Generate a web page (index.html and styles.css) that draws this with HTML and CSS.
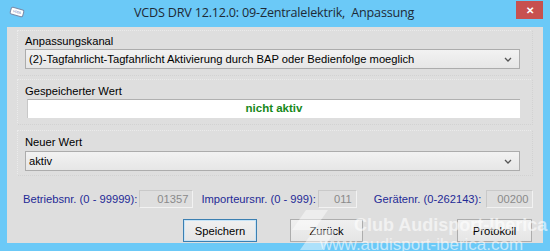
FILE: index.html
```html
<!DOCTYPE html>
<html lang="de">
  <head>
    <meta charset="UTF-8" />
    <title>VCDS DRV 12.12.0: 09-Zentralelektrik, Anpassung</title>
    <link rel="stylesheet" href="styles.css">
  </head>

  <body>
    <div class="window">
      <div class="titlebar">
        <i class="app-icon">VCDS</i>
        <span class="title">VCDS DRV 12.12.0: 09-Zentralelektrik,&nbsp; Anpassung</span>
        <button class="close">&#x2715;</button>
      </div>

      <div class="client">
        <div class="group group-kanal">
          <p class="label">Anpassungskanal</p>
          <div class="combo">
            <span>(2)-Tagfahrlicht-Tagfahrlicht Aktivierung durch BAP oder Bedienfolge moeglich</span>
            <svg class="chevron" width="8" height="5" viewBox="0 0 8 5"><path d="M1 1l3 3 3-3" fill="none" stroke="#555" stroke-width="1.3"/></svg>
          </div>
        </div>

        <div class="group group-stored">
          <p class="label">Gespeicherter Wert</p>
          <div class="value">nicht aktiv</div>
        </div>

        <div class="group group-new">
          <p class="label">Neuer Wert</p>
          <div class="combo">
            <span>aktiv</span>
            <svg class="chevron" width="8" height="5" viewBox="0 0 8 5"><path d="M1 1l3 3 3-3" fill="none" stroke="#555" stroke-width="1.3"/></svg>
          </div>
        </div>

        <div class="numbers">
          <span class="num-label">Betriebsnr. (0 - 99999):</span>
          <span class="num-box box-betrieb">01357</span>
          <span class="num-label">Importeursnr. (0 - 999):</span>
          <span class="num-box box-importeur">011</span>
          <span class="num-label label-geraet">Gerätenr. (0-262143):</span>
          <span class="num-box box-geraet">00200</span>
        </div>

        <div class="buttons">
          <button class="btn btn-save">Speichern</button>
          <button class="btn btn-back">Zurück</button>
          <button class="btn btn-log">Protokoll</button>
        </div>
      </div>

      <!-- Wasserzeichen über dem Fenster -->
      <svg class="wm-logo" width="60" height="42" viewBox="0 0 60 42">
        <path d="M14 2h22l-14 20h22l-14 20H8l14-20H0z" fill="rgba(255,255,255,0.45)"/>
      </svg>
      <div class="watermark">
        <span class="wm-club">Club Audisport-Iberica</span>
        <span class="wm-url">www.audisport-iberica.com</span>
      </div>
    </div>
  </body>
</html>
```

FILE: styles.css
```css
body {
  margin: 0;
  background: #6bc9f7;
  font-family: "Liberation Sans", Arial, sans-serif;
}

.window {
  position: relative;
  width: 550px;
  height: 251px;
  overflow: hidden;
  background: #6bc9f7;
}

.titlebar {
  height: 27px;
  display: flex;
  align-items: center;
  position: relative;
}

.app-icon {
  margin-left: 10px;
  margin-top: -3px;
  width: 12px;
  height: 6px;
  background: #fff;
  border: 1px solid #7a8aa8;
  border-radius: 2px;
  transform: rotate(15deg);
  font-size: 3px;
  font-style: normal;
  line-height: 6px;
  color: #3050a0;
  text-align: center;
  overflow: hidden;
}

.title {
  margin-left: 110px;
  font-family: "Open Sans", "Noto Sans", sans-serif;
  font-size: 12.6px;
  letter-spacing: -0.2px;
  color: #1e2a36;
  margin-top: -2px;
  white-space: nowrap;
}

.close {
  position: absolute;
  right: 7px;
  top: 1px;
  width: 27px;
  height: 18px;
  border: none;
  background: #c7504f;
  color: #fff;
  font-size: 10px;
  font-weight: bold;
  padding: 0;
}

.client {
  margin: 0 7px;
  height: 216px;
  background: #dedede;
  padding: 3px 10px 0 10px;
  box-sizing: border-box;
  font-size: 11.2px;
  color: #000;
}

.group {
  box-sizing: border-box;
  height: 46px;
  border: 1px dotted #ebebeb;
  border-right-color: #d2d2d2;
  border-bottom-color: #d2d2d2;
  padding: 0 12px 0 7px;
}

.group .label {
  margin: 0;
  line-height: 12px;
  white-space: nowrap;
}

.group-kanal {
  padding-top: 4px;
}

.group-kanal .combo {
  margin-top: 2px;
}

.group-stored {
  margin-top: 3px;
  padding-top: 5px;
}

.group-new {
  margin-top: 5px;
  padding-top: 5px;
}

.group-new .combo {
  margin-top: 3px;
}

.combo {
  height: 20px;
  box-sizing: border-box;
  border: 1px solid #acacac;
  background: linear-gradient(#f2f2f2, #e6e6e6);
  display: flex;
  align-items: center;
  justify-content: space-between;
  padding: 0 7px 0 3px;
  white-space: nowrap;
}

.chevron {
  display: block;
  flex-shrink: 0;
}

.value {
  margin-top: 2px;
  margin-left: 2px;
  height: 19px;
  box-sizing: border-box;
  border-top: 1px solid #b0b0b0;
  border-left: 1px solid #c8c8c8;
  background: #fff;
  color: #17891a;
  font-weight: bold;
  font-size: 11.5px;
  text-align: center;
  line-height: 17px;
}

.numbers {
  margin-top: 14px;
  display: flex;
  align-items: center;
  color: #1f2a96;
  height: 18px;
  padding-left: 6px;
  white-space: nowrap;
}

.num-label,
.num-box {
  flex-shrink: 0;
}

.num-box {
  height: 18px;
  box-sizing: border-box;
  border: 1px solid #f2f2f2;
  border-top-color: #c9c9c9;
  border-left-color: #c9c9c9;
  color: #8a8a8a;
  text-align: right;
  line-height: 16px;
  padding-right: 4px;
  margin-left: 2px;
}

.box-betrieb {
  width: 54px;
  margin-right: 8px;
}

.box-importeur {
  width: 39px;
}

.label-geraet {
  margin-left: 17px;
}

.box-geraet {
  width: 47px;
  margin-left: 5px;
}

.buttons {
  margin-top: 11px;
  display: flex;
  height: 23px;
}

.btn {
  flex-shrink: 0;
  height: 23px;
  border: 1px solid #adadad;
  background: linear-gradient(#f0f0f0, #e5e5e5);
  font-family: "Liberation Sans", Arial, sans-serif;
  font-size: 11.2px;
  color: #000;
  padding: 0;
}

.btn-save {
  width: 74px;
  margin-left: 166px;
  border-color: #3c7fb1;
  box-shadow: inset 0 0 0 1px #c5e3f7;
}

.btn-back {
  width: 73px;
  margin-left: 33px;
}

.btn-log {
  width: 75px;
  margin-left: 94px;
}

.wm-logo {
  position: absolute;
  left: 292px;
  top: 208px;
  pointer-events: none;
}

.watermark {
  position: absolute;
  left: 320px;
  top: 214px;
  display: flex;
  flex-direction: column;
  color: rgba(255, 255, 255, 0.6);
  font-family: "Liberation Sans", Arial, sans-serif;
  font-weight: bold;
  pointer-events: none;
  white-space: nowrap;
}

.wm-club {
  margin-left: 34px;
  font-size: 18px;
  line-height: 22px;
}

.wm-url {
  font-size: 17px;
  line-height: 17px;
  font-weight: normal;
}
```
